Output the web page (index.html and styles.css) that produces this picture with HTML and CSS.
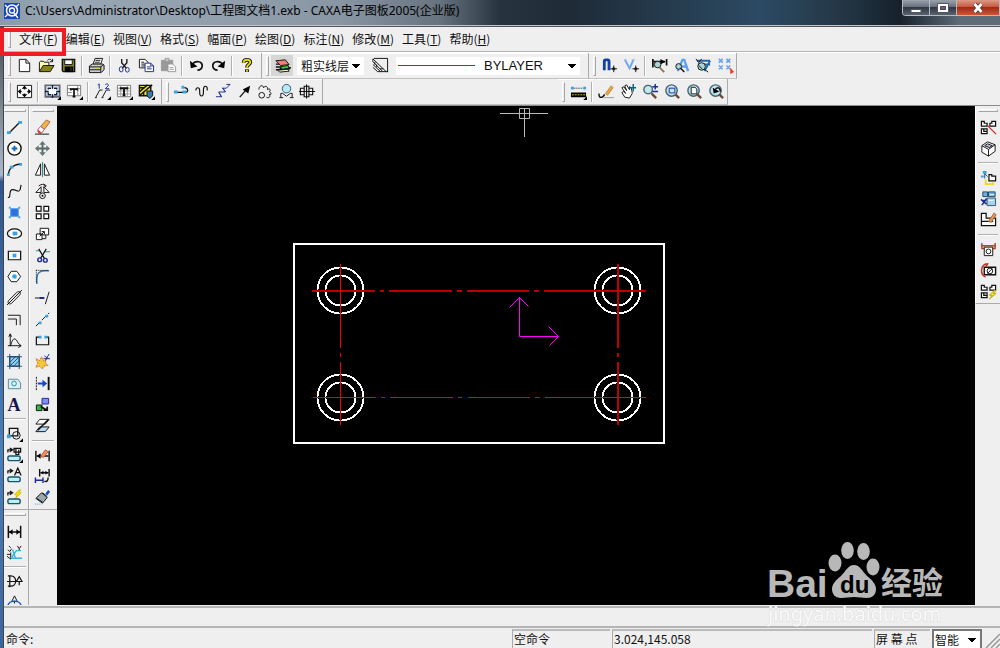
FILE: index.html
```html
<!DOCTYPE html>
<html lang="zh-CN">
<head>
<meta charset="utf-8">
<title>CAXA电子图板2005(企业版)</title>
<link rel="stylesheet" href="styles.css">
</head>
<body>
<div class="window">
<header class="titlebar">
  <svg class="app-icon" viewBox="0 0 16 16"><rect width="16" height="16" fill="#1747b8"/><circle cx="8" cy="7.500" r="5.500" fill="none" stroke="#fff" stroke-width="1.500"/><circle cx="8" cy="7.500" r="2.500" fill="none" stroke="#fff" stroke-width="1.300"/><path d="M10 10l4 5M1 2l2 2M15 1l-3 3M1 14l3-3" stroke="#fff" stroke-width="1.300"/></svg>
  <h1 class="title">C:\Users\Administrator\Desktop\工程图文档1.exb - CAXA电子图板2005(企业版)</h1>
  <div class="caption">
    <button class="cap" aria-label="最小化"><svg viewBox="0 0 14 12"><path d="M2 7.500h10v3H2z" fill="#fff" stroke="#556"/></svg></button>
    <button class="cap" aria-label="最大化"><svg viewBox="0 0 14 12"><path d="M1.500 1.500h11v9h-11z" fill="#fff" stroke="#556"/><path d="M4.500 4.500h5v3h-5z" fill="#667" stroke="#445"/></svg></button>
    <button class="cap close" aria-label="关闭"><svg viewBox="0 0 14 12"><path d="M3.500 2l7 8M10.500 2l-7 8" stroke="#533" stroke-width="4.500"/><path d="M3.500 2l7 8M10.500 2l-7 8" stroke="#fff" stroke-width="2.800"/></svg></button>
  </div>
</header>

<nav class="menubar">
  <i class="grip"></i>
  <button class="menu marked">文件(<u>F</u>)</button>
  <button class="menu">编辑(<u>E</u>)</button>
  <button class="menu">视图(<u>V</u>)</button>
  <button class="menu">格式(<u>S</u>)</button>
  <button class="menu">幅面(<u>P</u>)</button>
  <button class="menu">绘图(<u>D</u>)</button>
  <button class="menu">标注(<u>N</u>)</button>
  <button class="menu">修改(<u>M</u>)</button>
  <button class="menu">工具(<u>T</u>)</button>
  <button class="menu">帮助(<u>H</u>)</button>
</nav>

<div class="bands">
<div class="row">
  <div class="band">
    <i class="grip"></i>
    <button class="tool" aria-label="新建"><svg viewBox="0 0 18 18"><path class="w" d="M3.500 2.500h7l4 4v9h-11z"/><path d="M10.500 2.500v4h4"/></svg></button>
    <button class="tool" aria-label="打开"><svg viewBox="0 0 18 18"><path d="M1.500 15V5.500l1-1h3l1 1h5V9" fill="#fffbb0"/><path d="M1.500 15.500l4-6.500H17l-4 6.500z" fill="#858512"/><path d="M10 3.500c2-2 4-1 5 1M15.500 2v3h-3"/></svg></button>
    <button class="tool" aria-label="保存"><svg viewBox="0 0 18 18"><path d="M2.500 2.500h13v13h-12l-1-1z" fill="#8b8b12" stroke-width="1.500"/><path class="w" d="M5 3h8v5H5z"/><path class="k" d="M5 10h9v6H5z"/><path class="w" d="M11 11.500h1v3h-1z"/></svg></button>
    <i class="sep"></i>
    <button class="tool" aria-label="打印"><svg viewBox="0 0 18 18"><path class="w" d="M5.500 7.500l2-6h8l-2 6z"/><path d="M8 3.500h5M7.500 5.500h5"/><path d="M1.500 9.500l3-2h11l1.500 1v5l-3 3h-12.500z" fill="#ccc"/><path d="M1.500 10.500h12l3-2.500M13.500 10v6M2 13.500h11"/><path d="M8 12h4" stroke="#dd0"/></svg></button>
    <i class="sep"></i>
    <button class="tool" aria-label="剪切"><svg viewBox="0 0 18 18"><path d="M6 2v4l5 6M11.500 2v4l-5 6" stroke-width="1.400"/><g class="n"><ellipse cx="5.500" cy="13" rx="2" ry="2.800"/><ellipse cx="12" cy="13.500" rx="2" ry="2.500"/></g></svg></button>
    <button class="tool" aria-label="复制"><svg viewBox="0 0 18 18"><path class="w" d="M1.500 2.500h6l3 3v6h-9z"/><path d="M3.500 5.500h3M3.500 7.500h4M3.500 9.500h4"/><path class="w n" d="M7.500 6.500h6l3 3v6h-9z"/><path class="n" d="M13.500 6.500v3h3M9.500 10.500h4M9.500 12.500h5"/></svg></button>
    <button class="tool" aria-label="粘贴"><svg viewBox="0 0 18 18" class="dim"><path d="M1.500 3.500h12v11h-12z" fill="#999"/><path d="M5.500 1.500h4v3h-4z" fill="#ccc"/><path class="w" d="M8.500 7.500h5l3 3v5h-8z"/><path d="M10 11h4M10 13h5"/></svg></button>
    <i class="sep"></i>
    <button class="tool" aria-label="撤销"><svg viewBox="0 0 18 18"><path d="M4 9c3-6 12-5 11 1-.5 3-3 4-5 4" stroke-width="1.800"/><path class="k" d="M2 4l1 8 7-2z"/></svg></button>
    <button class="tool" aria-label="重做"><svg viewBox="0 0 18 18"><path d="M14 9c-3-6-12-5-11 1 .5 3 3 4 5 4" stroke-width="1.800"/><path class="k" d="M16 4l-1 8-7-2z"/></svg></button>
    <i class="sep"></i>
    <button class="tool" aria-label="帮助"><svg viewBox="0 0 18 18"><path d="M6 6c0-4 7-4 7-.5C13 8 9.500 8 9.500 11M9.500 13v3" stroke-width="4"/><path d="M6 6c0-4 7-4 7-.5C13 8 9.500 8 9.500 11M9.500 13.500v2" stroke="#e8dc00" stroke-width="2"/></svg></button>
  </div>
  <div class="band">
    <i class="grip"></i>
    <button class="tool pressed" aria-label="图层"><svg viewBox="0 0 18 18"><path d="M2 13.500h13l2-2-11 1M2 10.500h11M2 7.500h4" stroke-width="1.500"/><path d="M2 4l10-1 4 5-9 1z" fill="#f08078"/><path d="M7 10l8-1 1 3-8 1z" fill="#3bcc3b"/><path class="w" d="M4 14l11-1 1 2-10 1z"/></svg></button>
    <select class="combo layer" aria-label="当前图层"><option>粗实线层</option></select>
    <button class="tool" aria-label="线型设置"><svg viewBox="0 0 18 18"><path d="M2 1.500h14.500V16"/><path d="M1 2l14 13.500M1 5l10 10M1 8l8 7.500M1 11l5 4.500M8 12.500h4M6 15.500h11M1 2v3M3 5v3M5 8v3"/></svg></button>
    <select class="combo linetype" aria-label="线型"><option>BYLAYER</option></select>
  </div>
  <div class="band">
    <i class="grip"></i>
    <button class="tool" aria-label="捕捉"><svg viewBox="0 0 18 18"><path d="M3.500 14V4.500Q3.500 3 5 3h2q1.500 0 1.500 1.500V14" stroke="#1240a8" stroke-width="3"/><path d="M13.500 9v7M10 12.500h7M12.500 11.500h2v2h-2z"/></svg></button>
    <button class="tool" aria-label="点过滤"><svg viewBox="0 0 18 18"><path d="M2 3l5 9 4-9" stroke="#6ca6ee" stroke-width="2"/><path d="M1 3h3M9 3h4M6 12h3" stroke="#abc"/><path d="M13.500 9v7M10 12.500h7M12.500 11.500h2v2h-2z"/></svg></button>
    <i class="sep"></i>
    <button class="tool" aria-label="标注设置"><svg viewBox="0 0 18 18"><path d="M2 2v9M16.500 2v7M3 5h12" stroke-width="1.800"/><path class="k" d="M10 2l5 3-5 3z"/><circle cx="7" cy="8" r="3.500" fill="#a9d4d4"/><path d="M9 11l5 5" stroke="#857560" stroke-width="2"/></svg></button>
    <button class="tool" aria-label="文本风格"><svg viewBox="0 0 18 18"><path d="M5 15l5-12h2l4 12M8 10h7" stroke="#5f9ff0" stroke-width="2.500"/><circle cx="6" cy="10" r="3" fill="#a9d4d4"/><path d="M8 12l4 4" stroke-width="1.500"/></svg></button>
    <button class="tool" aria-label="剖面图案"><svg viewBox="0 0 18 18"><path d="M2 4h14M10 15l6-11M3 8h13" stroke="#2468a8" stroke-width="2"/><circle cx="7" cy="10" r="4" fill="#a9d4d4"/><path d="M4 9l4 4M10 13l4 3M1 2l3 4 3-4"/></svg></button>
    <button class="tool" aria-label="点样式"><svg viewBox="0 0 18 18"><path d="M2 2l4 4M6 2l-4 4M10 2l4 4M14 2l-4 4M2 9l4 4M6 9l-4 4M10 9l4 4M14 9l-4 4" stroke="#68a1ed" stroke-width="1.700"/><path d="M14 11l4 5-4 2z" fill="#f53b0b" stroke="none"/></svg></button>
  </div>
</div>
<div class="row">
  <div class="band">
    <i class="grip"></i>
    <button class="tool" aria-label="图幅"><svg viewBox="0 0 18 18"><path class="w" d="M1.500 2.500h15v13h-15z"/><path d="M9 4v3M9 11v3M3 9h3M12 9h3" stroke-width="1.500"/><path class="k" d="M6 6l3-3 3 3zM6 12l3 3 3-3zM5 6L2 9l3 3zM13 6l3 3-3 3z"/></svg></button>
    <i class="sep"></i>
    <button class="tool" aria-label="图框"><svg viewBox="0 0 18 18"><path class="w" d="M1.500 2.500h15v12h-15z" stroke="#667" stroke-width="2"/><path d="M4.500 7V5.500h3M10.500 5.500h3V7M4.500 10v2.500h3M10.500 12.500h3V10M9 2v4M9 12v4M1 9h4M13 9h4" stroke="#024" stroke-width="1.500"/><path class="k" d="M18 14v4h-4z"/></svg></button>
    <button class="tool" aria-label="标题栏"><svg viewBox="0 0 18 18"><path class="w" d="M1.500 2.500h14v11h-14z" stroke="#777"/><path d="M1 6h14M1 10h5M12.500 3v10" stroke="#888"/><path d="M5 8V6.500h7V8M8.500 6v9M7 14.500h3" stroke-width="1.800"/><path class="k" d="M18 14v4h-4z"/></svg></button>
    <i class="sep"></i>
    <button class="tool" aria-label="序号"><svg viewBox="0 0 18 18"><path d="M2 15l4-7.500h3M9 15l4-7.500h4M1 15.500h2M8 15.500h2"/><path class="n" d="M4 2l1.500-1v5M12 2c1-2 4-1 3 1l-3 3h4"/><path class="k" d="M18 14v4h-4z"/></svg></button>
    <button class="tool" aria-label="明细表"><svg viewBox="0 0 18 18"><path class="w" d="M1.500 2.500h14v12h-14z" stroke="#777"/><path d="M1 5.500h15M1 8.500h15M1 11.500h15M5 3v11M12 3v11" stroke="#999"/><path d="M5 7V5.500h7V7M8.500 5v8M7 13h3" stroke-width="2"/><path class="k" d="M18 14v4h-4z"/></svg></button>
    <button class="tool" aria-label="填写明细"><svg viewBox="0 0 18 18"><path d="M1.500 2.500h12v11h-12z" fill="#e9e13b" stroke-width="1.500"/><path d="M2 13L15 2M2 9l8-7M2 5h4M6 13V9" stroke-width="1.500"/><path d="M9.500 8.500h6v5l-3 3-3-3z" fill="#347bb8"/><path class="k" d="M18 14v4h-4z"/></svg></button>
  </div>
  <div class="band tight">
    <i class="grip"></i>
    <button class="tool" aria-label="引出线"><svg viewBox="0 0 18 18"><path d="M4 10h9c4 0 3-5-1-5" stroke-width="1.300"/><path class="s" d="M1 8h4v3H1zM10 8h4v3h-4zM9 3h3v3H9z"/></svg></button>
    <button class="tool" aria-label="波浪线"><svg viewBox="0 0 18 18"><path d="M2 8c0-4 4-4 4 0v2c0 5 4 5 4 0V7c0-5 4-4 4-1v2" stroke-width="1.200"/></svg></button>
    <button class="tool" aria-label="双折线"><svg viewBox="0 0 18 18"><path class="n" d="M1 14.500h6l-3-5h7l-3-4h4l4-4M7 15l-3-5M11 9L8 5M12 1.500h4"/></svg></button>
    <button class="tool" aria-label="箭头"><svg viewBox="0 0 18 18"><path d="M4 15l6-7" stroke-width="1.400"/><path class="k" d="M15 3l-2 8-6-4z"/></svg></button>
    <button class="tool" aria-label="齿轮"><svg viewBox="0 0 18 18"><path d="M2 7c0-5 5-5 5-2 2-3 5-1 4 2 3-2 4 1 2 2 3 2 2 4 0 3 2 4-2 4-3 3"/><circle cx="5" cy="13" r="3"/></svg></button>
    <button class="tool" aria-label="圆弧拟合"><svg viewBox="0 0 18 18"><circle cx="9" cy="6" r="4.500" fill="#b8e8f4" stroke="#357"/><path d="M3 15v-4h2l4 3 4-3h2v4M1.500 15.500h4M12.500 15.500h4"/></svg></button>
    <button class="tool" aria-label="孔/轴"><svg viewBox="0 0 18 18"><path d="M1.500 5.500h4v7h-4zM5.500 3.500h5v11h-5zM10.500 5.500h4v7h-4zM0 9h17M8 1.500v15" stroke-width="1.200"/></svg></button>
  </div>
  <i class="spacer"></i>
  <div class="band">
    <i class="grip"></i>
    <button class="tool" aria-label="两点距离"><svg viewBox="0 0 18 18"><path d="M4 5.500h10" stroke-dasharray="1 1"/><path class="s" d="M1 4h3v3H1zM14 4h3v3h-3z"/><path class="k" d="M1 10h16v5H1zM18 14v4h-4z"/><path d="M2 12.500h14" stroke="#dc0" stroke-dasharray="2 1"/></svg></button>
    <i class="sep"></i>
    <button class="tool" aria-label="重画"><svg viewBox="0 0 18 18"><path d="M1 11c0 6 4 5 6 1" stroke-width="1.500"/><path d="M8 11l6-8 2 2-6 8z" fill="#f4a433" stroke="#b85"/><path d="M6 15.500h11" stroke="#999"/></svg></button>
    <button class="tool" aria-label="平移显示"><svg viewBox="0 0 18 18"><path class="w" d="M5 15L2 10l2-1 2 2-4-6 2-1 3 4-2-5 2-1 3 5V4l2 1 1 6-3 5z"/><path d="M14 1v8M10 5h7" stroke="#068" stroke-width="1.500"/></svg></button>
    <button class="tool" aria-label="动态缩放"><svg viewBox="0 0 18 18"><circle class="lens" cx="6.500" cy="7" r="4.500"/><path class="handle" d="M10 11l5 5"/><path class="n" d="M11 4h6M14 1v6M11 9h6" stroke-width="1.500"/></svg></button>
    <button class="tool" aria-label="窗口缩放"><svg viewBox="0 0 18 18"><circle class="lens" cx="8" cy="8" r="6"/><path class="n" d="M5.500 5.500h6v5h-6z"/><path class="handle" d="M12 12l4 4"/></svg></button>
    <button class="tool" aria-label="显示全部"><svg viewBox="0 0 18 18"><circle class="lens" cx="8" cy="8" r="6"/><path class="w" d="M5.500 4.500h4l2 2v5h-6z"/><path class="handle" d="M12 12l4 4"/></svg></button>
    <button class="tool" aria-label="显示回溯"><svg viewBox="0 0 18 18"><circle class="lens" cx="8" cy="8" r="6"/><path class="k" d="M5 5l1 6 6-2z"/><path d="M7 8c3-5 6-3 6 1" stroke-width="1.500"/><path class="handle" d="M12 12l4 4"/></svg></button>
  </div>
</div>
</div>

<main class="workspace">
<aside class="palettes">
 <div class="pair">
  <div class="palette">
    <i class="hgrip"></i>
    <div class="stack">
    <button class="tool" aria-label="直线"><svg viewBox="0 0 18 18"><path d="M3 15L14 4" stroke-width="1.400"/><path class="s" d="M1 13h4v3H1zM13 2h4v3h-4z"/></svg></button>
    <button class="tool" aria-label="圆"><svg viewBox="0 0 18 18"><circle cx="9" cy="9" r="7" class="w" stroke-width="1.500"/><path d="M9 6v6M6 9h6" stroke="#16b" stroke-width="2"/></svg></button>
    <button class="tool" aria-label="圆弧"><svg viewBox="0 0 18 18"><path d="M2.500 15c0-7 5-11 13-12" stroke-width="1.200"/><path class="s" d="M1 13h3v3H1zM4 5h4v3H4zM14 2h3v3h-3z"/></svg></button>
    <button class="tool" aria-label="样条"><svg viewBox="0 0 18 18"><path d="M2 15c4 2 0-8 5-8s6 4 8 0l1-5" stroke-width="1.200"/></svg></button>
    <button class="tool" aria-label="点"><svg viewBox="0 0 18 18"><path d="M5 5h8v8H5z" fill="#2b72df" stroke="#4898e8"/><path class="s" d="M3 3h2v2H3zM13 3h2v2h-2zM3 13h2v2H3zM13 13h2v2h-2z"/></svg></button>
    <button class="tool" aria-label="椭圆"><svg viewBox="0 0 18 18"><ellipse class="w" cx="9" cy="9" rx="7.500" ry="5" stroke-width="1.300"/><path class="s" d="M7 7h5v4H7z"/></svg></button>
    <button class="tool" aria-label="矩形"><svg viewBox="0 0 18 18"><path class="w" d="M2.500 4.500h13v9h-13z" stroke-width="1.300"/><path class="s" d="M7 7h4v4H7z"/></svg></button>
    <button class="tool" aria-label="正多边形"><svg viewBox="0 0 18 18"><path class="w" d="M5.500 3.500h6l4 5.500-4 5.500h-6L2 9z"/><circle class="s" cx="9" cy="9" r="2.500"/></svg></button>
    <button class="tool" aria-label="中心线"><svg viewBox="0 0 18 18"><path d="M3 12l8-8c3-3 6 0 3 3l-8 8c-3 2-5 0-3-3zM1 17L17 1"/></svg></button>
    <button class="tool" aria-label="等距线"><svg viewBox="0 0 18 18"><path d="M2 4.500h13V15M2 8.500h9V15"/></svg></button>
    <button class="tool" aria-label="公式曲线"><svg viewBox="0 0 18 18"><path d="M4.500 2v13M2 14.500h14M3 5l1.500-3L6 5M13 12l3 2.500-3 2M5 14c2-8 5-9 8-2"/></svg></button>
    <button class="tool" aria-label="剖面线"><svg viewBox="0 0 18 18"><path d="M4 4h10v10H4z" fill="#93cff1"/><path d="M1 4h16M1 14h16M4 1v16M14 1v16M4 10l6-6M4 14L14 4M8 14l6-6" stroke="#174f80"/></svg></button>
    <button class="tool" aria-label="填充"><svg viewBox="0 0 18 18"><path d="M2.500 4.500h10l3 4v6h-13z" fill="#d8f1f5" stroke="#5a8597"/><circle cx="8.500" cy="9" r="2.500" stroke="#2b89a8"/></svg></button>
    <button class="tool letter" aria-label="文字">A</button>
    </div>
    <i class="hsep"></i>
    <div class="stack">
    <button class="tool" aria-label="块操作"><svg viewBox="0 0 18 18"><path d="M3.500 3.500h9v8h-9z" stroke-width="1.400"/><circle cx="11" cy="11" r="4"/><path class="s" d="M1 10h4v4H1z"/><path class="k" d="M18 14v4h-4z"/></svg></button>
    <button class="tool" aria-label="库操作"><svg viewBox="0 0 18 18"><path d="M2 7V4h4M4 2l3 2-3 2M8.500 2.500h7v4h-7zM10.500 2v7h3V4" stroke-width="1.300"/><rect class="chip" x="2" y="10.500" width="13" height="5" rx="2"/><path class="k" d="M18 14v4h-4z"/></svg></button>
    <button class="tool" aria-label="文字块"><svg viewBox="0 0 18 18"><path d="M2 7V4h4M4 2l3 2-3 2M9 9l3.500-8L16 9M10 6h5" stroke-width="1.300"/><rect class="chip" x="2" y="10.500" width="13" height="5" rx="2"/></svg></button>
    <button class="tool" aria-label="闪电块"><svg viewBox="0 0 18 18"><path d="M2 7V4h4M4 2l3 2-3 2" stroke-width="1.300"/><path d="M14 1L9 6h3l-2 4 6-6h-3l3-3z" fill="#ffe600" stroke="#d9be00"/><rect class="chip" x="2" y="10.500" width="13" height="5" rx="2"/></svg></button>
    </div>
  </div>
  <div class="palette">
    <i class="hgrip"></i>
    <div class="stack">
    <button class="tool" aria-label="删除"><svg viewBox="0 0 18 18"><path d="M7 8l6-7 4 2-6 8z" fill="#f2b24c" stroke="#a64"/><path class="w" d="M4 11l3-3 4 3-3 4H5z" stroke="#966"/><path d="M4 12l3 3" stroke="#e33" stroke-width="2"/><path d="M1 16h15"/></svg></button>
    <button class="tool" aria-label="平移"><svg viewBox="0 0 18 18"><path d="M9 3v12M3 9h12" stroke="#566" stroke-width="2"/><path d="M5.500 5L9 1l3.500 4zM5.500 13L9 17l3.500-4zM5 5.500L1 9l4 3.500zM13 5.500L17 9l-4 3.500z" fill="#677" stroke="none"/></svg></button>
    <button class="tool" aria-label="镜像"><svg viewBox="0 0 18 18"><path class="w" d="M7 3v12H1.500zM11 3v12h5.500z"/><path d="M9 1v16" stroke="#288"/></svg></button>
    <button class="tool" aria-label="旋转"><svg viewBox="0 0 18 18"><path class="w" d="M7.500 4v6H2zM10.500 4v6H16z"/><circle cx="9" cy="13.500" r="3"/><circle class="k" cx="9" cy="13.500" r="1"/><path d="M5 3c3-2 5-2 7 0M10 1l3 2-3 2"/></svg></button>
    <button class="tool" aria-label="阵列"><svg viewBox="0 0 18 18"><path class="w" d="M2.500 2.500h5v5h-5zM10.500 2.500h5v5h-5zM2.500 10.500h5v5h-5zM10.500 10.500h5v5h-5z" stroke-width="1.300"/></svg></button>
    <button class="tool" aria-label="比例缩放"><svg viewBox="0 0 18 18"><path class="w" d="M6.500 3.500h9v7h-9zM2.500 9.500h6v6h-6z"/><path d="M6 12l5-5M8 7h3v3M8.500 14.500h4v-4"/></svg></button>
    <button class="tool" aria-label="裁剪"><svg viewBox="0 0 18 18"><path d="M2 4h4M11 5h6" stroke="#288"/><path d="M5 2l6 10M13 2L7 12" stroke-width="1.300"/><g class="n" stroke-width="1.500"><circle cx="6" cy="13.500" r="2"/><circle cx="12" cy="14" r="2"/></g></svg></button>
    <button class="tool" aria-label="过渡"><svg viewBox="0 0 18 18"><path d="M3 17v-6c0-5 3-8 8-8h5" stroke="#357cae" stroke-width="1.600"/><path d="M2.500 2v14M2 2.500h14" stroke-dasharray="1 1"/></svg></button>
    <button class="tool" aria-label="齐边"><svg viewBox="0 0 18 18"><path d="M1 9.500h6M12 16l4-13"/><path d="M6 9.500h5" stroke="#128" stroke-width="2"/></svg></button>
    <button class="tool" aria-label="打断"><svg viewBox="0 0 18 18"><path d="M2 16L16 2" stroke-dasharray="6 3"/><path class="s" d="M5 11h3v3H5zM12 4h3v3h-3z"/></svg></button>
    <button class="tool" aria-label="拉伸"><svg viewBox="0 0 18 18"><path d="M6 5.500H2.500v8h13v-8H12" stroke-width="1.300"/><path class="s" d="M5 4h3v3H5zM11 4h3v3h-3z"/></svg></button>
    <button class="tool" aria-label="打散"><svg viewBox="0 0 18 18"><path d="M2 6l4 2 2-4 2 4 3-1-1 4 3 2-5 1-1 3-3-3-4 1 2-4z" fill="#f4c832" stroke="#c64" stroke-dasharray="2 1"/><path class="n" d="M11 3l4 3M16 1l-4 7M10 6h7"/></svg></button>
    <button class="tool" aria-label="局部放大"><svg viewBox="0 0 18 18"><path d="M2.500 2v14" stroke-dasharray="2 1"/><path d="M15.500 2v14" stroke-width="2"/><path class="b" d="M4 8h5V5l5 4-5 4v-3H4z"/></svg></button>
    <button class="tool" aria-label="转换"><svg viewBox="0 0 18 18"><path d="M8.500 2.500h7v6h-7z" fill="#7e8ff0" stroke="#22a"/><path d="M2.500 9.500h6v6h-6z" fill="#2eb84a"/><path d="M7 11l7 4M14 11v4h-4" stroke-width="1.800"/></svg></button>
    <button class="tool" aria-label="层控制"><svg viewBox="0 0 18 18"><path class="w" d="M6 2.500h10l-4 5H2z"/><path d="M6 10.500h10l-4 5H2z" fill="#b7ddf6"/><path d="M15 3L4 14" stroke-width="1.500"/></svg></button>
    </div>
    <i class="hsep"></i>
    <div class="stack">
    <button class="tool" aria-label="标注编辑"><svg viewBox="0 0 18 18"><path d="M2 4v11M16 4v11M3 9.500h12" stroke-width="1.500"/><path class="k" d="M3 9.500l4-3v6z"/><path d="M7 10l5-7 3 2-5 6z" fill="#f79058" stroke="#b54"/></svg></button>
    <button class="tool" aria-label="尺寸驱动"><svg viewBox="0 0 18 18"><path d="M6 1v8M16 1v8M7 5h8M15 10c0 4-2 5-4 4" stroke-width="1.500"/><path class="k" d="M7 5l3-2v4zM15 5l-3-2v4z"/><path class="n" d="M1.500 10v6M9.500 10v6M2 13h7" stroke-width="1.500"/></svg></button>
    <button class="tool" aria-label="格式刷"><svg viewBox="0 0 18 18"><path d="M12 5l3-4 2 2-3 4z" class="b"/><path d="M8 4l6 5-5 6-7-5z" fill="#9aa9ad"/><path d="M3 10l6 4M9 4l5 4"/><path d="M1 16h8" stroke="#59c" stroke-dasharray="1 1"/></svg></button>
    </div>
  </div>
 </div>
 <div class="palette lower">
    <i class="hgrip"></i>
    <div class="stack">
    <button class="tool" aria-label="尺寸标注"><svg viewBox="0 0 18 18"><path d="M2.500 3v13M15.500 3v13M3 9.500h12" stroke-width="1.600"/><path class="k" d="M3 9.500l4-3v6zM15 9.500l-4-3v6z"/></svg></button>
    <button class="tool" aria-label="坐标标注"><svg viewBox="0 0 18 18"><path d="M2 6l2 2 2-3M5 9v7M1 13l4 3M12 2l2 3 2-3M14 5v2M1 11h4M3 2l2 2"/><path d="M5 15h12M6 14l5-7h5M7 6l3 9" stroke="#35b4df" stroke-width="1.500"/></svg></button>
    </div>
    <i class="hsep"></i>
    <div class="stack">
    <button class="tool" aria-label="倒角标注"><svg viewBox="0 0 18 18"><path d="M2 3h3c7 0 7 11 0 11H2M4 3v12M1 9h10M11 9l3-5 3 5zM14 9v4" stroke-width="1.300"/></svg></button>
    <button class="tool" aria-label="粗糙度"><svg viewBox="0 0 18 18"><path d="M6 8l3-6 3 6zM9 7v3"/><path d="M2 12c2-6 12-6 14 0" stroke="#25c" stroke-width="1.500"/></svg></button>
    </div>
 </div>
</aside>

<section class="canvas" aria-label="绘图区">
<svg class="drawing">
  <g fill="none" stroke="#b9b9b9"><path d="M443 7.500h48M467.500 2v29M462.500 2.500h10v10h-10z"/></g>
  <g fill="none" stroke="#fff" stroke-width="2">
    <path d="M237 138h370v199H237z"/>
    <g stroke-width="1.800" shape-rendering="crispEdges"><circle cx="283.500" cy="184.500" r="23"/><circle cx="283.500" cy="184.500" r="15"/>
    <circle cx="560.500" cy="184.500" r="23"/><circle cx="560.500" cy="184.500" r="15"/>
    <circle cx="283.500" cy="291.500" r="23"/><circle cx="283.500" cy="291.500" r="15"/>
    <circle cx="560.500" cy="291.500" r="23"/><circle cx="560.500" cy="291.500" r="15"/></g>
  </g>
  <g fill="none" stroke="#f00000">
    <path d="M255 185h63M323 185h4M332 185h63M400 185h5M410 185h62M477 185h5M487 185h102" stroke="#b80000" stroke-width="2"/>
    <path d="M256 291.500h63M324 291.500h4M333 291.500h63M401 291.500h4M411 291.500h62M478 291.500h5M488 291.500h101"/>
    <path d="M283.500 158v84M283.500 247v4M283.500 256v63"/>
    <path d="M561 158v84M561 247v4M561 256v63" stroke="#c00000" stroke-width="2"/>
  </g>
  <path d="M462.500 191v39.500H501M452.500 201.500l10-10 9 9M491.500 220.500l10 10-9 9" fill="none" stroke="#ff00ff"/>
</svg>
</section>

<aside class="palette right">
  <i class="hgrip"></i>
  <div class="stack">
  <button class="tool" aria-label="定义图符"><svg viewBox="0 0 18 18"><path class="w" d="M1.500 2.500h3v2h3v3h-6zM10.500 4.500h2v-2h4v5h-6zM1.500 10.500h6v5h-6zM4 10v3h3" stroke-width="1.300"/><path d="M8 7l9 9" stroke="#d22" stroke-width="1.300"/></svg></button>
  <button class="tool" aria-label="三维"><svg viewBox="0 0 18 18"><path class="w" d="M2 6l6-4 8 3v7l-7 5-7-4zM2 6l7 4 7-5M9 10v7"/><path d="M5 6l3-2 5 2-3 2z" fill="#bbd"/></svg></button>
  </div>
  <i class="hsep"></i>
  <div class="stack">
  <button class="tool" aria-label="提取图符"><svg viewBox="0 0 18 18"><path class="s" d="M3 2h4v3H3zM1 7h3v2H1z"/><path d="M5 5v5M5 5l3 3" stroke="#248"/><path class="w" d="M9.500 8.500V6h3v1.500h4v5h-7z" stroke-width="1.300"/><path d="M6 11v5h8v-2" stroke="#eed925" stroke-width="2"/></svg></button>
  <button class="tool" aria-label="图库管理"><svg viewBox="0 0 18 18"><path d="M3 2h5v5H3zM9 2h7v5H9z" fill="#6db0e6" stroke="#245"/><path d="M7.500 8.500h9v8h-9z" fill="#a6d4ef" stroke="#357"/><path class="n" d="M1 10l6 5M7 9l-5 7M2 11h5" stroke-width="1.600"/><path d="M10 5h5M9 11h5" stroke="#fff"/></svg></button>
  <button class="tool" aria-label="图库编辑"><svg viewBox="0 0 18 18"><path class="w" d="M1.500 2.500h5v5h10v8h-15zM2 11h12" stroke-width="1.300"/><path d="M9 11l6-9 2 2-5 8z" fill="#ed9551" stroke="#964"/></svg></button>
  </div>
  <i class="hsep"></i>
  <div class="stack">
  <button class="tool" aria-label="构件库"><svg viewBox="0 0 18 18"><path d="M1 5h16M2 2v6h3v3M16 2v6h-3v3" stroke="#b44525" stroke-width="1.500"/><path class="w" d="M4.500 6.500h9v9h-9z"/><circle cx="9" cy="11" r="2.500"/></svg></button>
  <button class="tool" aria-label="技术要求"><svg viewBox="0 0 18 18"><path class="w" d="M4.500 5.500h12v8h-12z" stroke-width="1.500"/><circle cx="10.500" cy="9.500" r="3"/><path d="M8 12l5-5"/><path d="M7 2C0 3 0 14 6 16M5 2h3L6 5" stroke="#c3321f" stroke-width="1.600"/></svg></button>
  <button class="tool" aria-label="驱动图符"><svg viewBox="0 0 18 18"><path class="w" d="M1.500 2.500h3v2h3v3h-6zM10.500 4.500h2v-2h4v5h-6zM1.500 10.500h6v5h-6zM4 10v3h3" stroke-width="1.300"/><path d="M15 8l-5 5h3l-3 4 7-6h-3l3-3z" fill="#ffea20" stroke="#b9a800"/></svg></button>
  </div>
</aside>
</main>

<footer class="bottom">
  <div class="prompt"></div>
  <div class="status">
    <label class="cmd">命令:<input type="text"></label>
    <div class="cell idle">空命令</div>
    <div class="cell coords">3.024,145.058</div>
    <div class="cell snap">屏 幕 点</div>
    <select class="combo mode" aria-label="捕捉方式"><option>智能</option></select>
    <svg class="sizer" viewBox="0 0 16 16"><path d="M2 16L16 2M7 16l9-9M12 16l4-4" stroke="#999" stroke-width="1.500"/></svg>
  </div>
  <svg class="watermark" viewBox="0 0 200 90">
    <g fill="#b8b8b8">
      <text class="wm-bai" x="7" y="57">Bai</text>
      <ellipse cx="75" cy="23" rx="6.500" ry="8.500"/>
      <ellipse cx="87.500" cy="10.500" rx="6.300" ry="8.500"/>
      <ellipse cx="103.500" cy="11.500" rx="6.300" ry="8.500"/>
      <ellipse cx="113" cy="27" rx="6.500" ry="8.500"/>
      <path d="M94 25c6 0 8 6 13 11 5 4 9 8 9 13 0 6-4 9-9 9-5 0-8-1-13-1s-8 1-13 1c-6 0-9-4-9-9 0-5 4-9 9-13 5-5 7-11 13-11z"/>
      <text class="wm-cn" x="121" y="54">经验</text>
    </g>
    <text class="wm-du" x="80" y="53">du</text>
    <text class="wm-url" x="8" y="81">jingyan.baidu.com</text>
  </svg>
</footer>
</div>
</body>
</html>
```

FILE: styles.css
```css
* { box-sizing: border-box; }
body {
  margin: 0;
  font: 12px/16px "Noto Sans CJK SC", sans-serif;
  color: #111;
  background: #efefef;
}
button, select, input { font: inherit; color: inherit; margin: 0; padding: 0; border: 0; background: none; }
svg { display: block; }

.window {
  display: flex;
  flex-direction: column;
  height: 100vh;
  padding-left: 4px;
  overflow: hidden;
  background:
    linear-gradient(#2b3843, #65717c 12%, #a9b9ca 27%, #2e5790 28%, #4a7fbd 70%, #3a66a0) 0 0 / 3px 100% no-repeat,
    #444;
}

/* title bar */
.titlebar {
  display: flex;
  align-items: center;
  height: 26px;
  margin-left: -4px;
  padding: 0 0 3px 4px;
  flex: none;
  background:
    linear-gradient(90deg, rgba(190, 202, 212, .55), rgba(180, 192, 203, .75) 6%, rgba(170, 182, 194, .7) 34%, rgba(150, 162, 174, .55) 44%, transparent 50%),
    linear-gradient(90deg, #4a5f72 0, #46566a 25%, #2b3742 45%, #1f2b37 57%, #2c4a63 76%, #243746 84%, #16212c 90%, #5e6b78 96%);
  border-bottom: 1px solid #c0c4c8;
}
.app-icon { width: 16px; height: 16px; }
.title { flex: 1; margin: 0 0 0 5px; font: 12px/18px "Noto Sans", "Noto Sans CJK SC", sans-serif; color: #000; white-space: nowrap; }
.caption {
  display: flex;
  align-self: flex-start;
  border: 1px solid #b4bac2;
  border-top: 0;
  border-right: 0;
  border-radius: 0 0 0 4px;
  overflow: hidden;
}
.cap {
  display: grid;
  place-items: center;
  width: 27px;
  height: 15px;
  border-right: 1px solid #b4bac2;
  background: linear-gradient(#9aa3ac, #68727d 45%, #2e3843 50%, #59646f);
}
.cap svg { width: 14px; height: 12px; }
.close { width: 43px; background: linear-gradient(#dd9986, #c75a41 45%, #a62a12 50%, #cf5434); }

/* menu */
.menubar {
  display: flex;
  align-items: center;
  height: 26px;
  flex: none;
  padding-left: 4px;
  background: #efefef;
  border-top: 1px solid #555;
  border-bottom: 1px solid #b4b4b4;
}
.menu { position: relative; padding: 0 4px 1px; line-height: 20px; white-space: nowrap; }
.menubar .grip { height: 18px; margin-right: 4px; }
.marked::after {
  content: "";
  position: absolute;
  inset: -1px -4px -6px -15px;
  border: 4px solid #ee1c25;
}

/* toolbars */
.bands { flex: none; background: #efefef; border-top: 1px solid #fff; border-bottom: 1px solid #8c8c8c; }
.row { display: flex; height: 26px; }
.band {
  display: flex;
  align-items: center;
  padding: 0 4px;
  border-right: 1px solid #aaa;
  border-bottom: 1px solid #c2c2c2;
  box-shadow: inset 0 1px #fff;
}
.band:last-child { padding-right: 0; }
.grip {
  width: 3px;
  height: 20px;
  margin-right: 2px;
  border: 1px solid;
  border-color: #fff #a5a5a5 #a5a5a5 #fff;
  flex: none;
}
.sep { width: 2px; height: 20px; margin: 0 2px; background: #b0b0b0; border-right: 1px solid #fff; flex: none; }
.spacer { flex: 0 1 235px; border-bottom: 1px solid #c2c2c2; }
.tool { display: grid; place-items: center; width: 22px; height: 21px; flex: none; }
.tight .tool { width: 21px; }
.tool svg { width: 17px; height: 17px; fill: none; stroke: #111; stroke-width: 1; }
.tool .w { fill: #fff; }
.tool .k { fill: #000; stroke: none; }
.tool .s { fill: #36a5df; stroke: none; }
.tool .b { fill: #1746d1; stroke: none; }
.tool .n { stroke: #1b2a94; }
.tool .lens { fill: #bfe8ef; stroke: #47636f; stroke-width: 1.5; }
.tool .handle { stroke: #6b4b35; stroke-width: 2.5; }
.tool .chip { fill: #bdeef5; stroke: #16566b; stroke-width: 1.5; }
.tool svg.dim { stroke: #999; }
.pressed { background: #d6d6d6; }
.letter { font: bold 18px/20px "Liberation Serif", serif; color: #16164f; }
.combo {
  appearance: none;
  height: 18px;
  border-radius: 0;
  background:
    linear-gradient(to bottom left, #000 50%, transparent 52%) right 8px center / 4px 4px no-repeat,
    linear-gradient(to bottom right, #000 50%, transparent 52%) right 4px center / 4px 4px no-repeat,
    #fff;
}
.layer { width: 67px; padding-left: 4px; margin: 0 5px 0 4px; }
.linetype {
  width: 184px;
  margin: 0 4px 0 5px;
  padding-left: 88px;
  font: 13px/18px "Liberation Sans", sans-serif;
  background:
    linear-gradient(to bottom left, #000 50%, transparent 52%) right 8px center / 4px 4px no-repeat,
    linear-gradient(to bottom right, #000 50%, transparent 52%) right 4px center / 4px 4px no-repeat,
    linear-gradient(#f00, #f00) 2px 8px / 77px 1px no-repeat,
    #fff;
}

/* workspace */
.workspace { display: flex; flex: 1; min-height: 0; background: #efefef; }
.palettes { display: flex; flex-direction: column; overflow: hidden; flex: none; }
.pair { display: flex; border-bottom: 1px solid #aaa; }
.palette { width: 25px; padding: 3px 2px 0 0; border-right: 1px solid #aaa; }
.palette + .palette { width: 28px; padding-left: 2px; border-left: 1px solid #fff; border-right-color: #efefef; }
.hgrip { display: block; height: 3px; margin-bottom: 5px; border: 1px solid; border-color: #fff #a5a5a5 #a5a5a5 #fff; }
.hsep { display: block; height: 2px; margin: 3px 0; background: #b0b0b0; border-bottom: 1px solid #fff; }
.stack { display: flex; flex-direction: column; }
.palette .tool { width: 20px; }
.palette .tool:nth-child(3n) { margin-bottom: 1px; }
.canvas { flex: 1; min-width: 0; background: #000; overflow: hidden; }
.drawing { width: 100%; height: 100%; }
.palette.right { width: 25px; padding-left: 2px; margin-bottom: auto; border: 0; border-left: 1px solid #fff; border-bottom: 1px solid #aaa; }

/* command line and status */
.bottom { position: relative; flex: none; background: #efefef; }
.prompt { height: 22px; margin-top: 1px; border-top: 2px solid #b4b4b4; border-bottom: 2px solid #b4b4b4; }
.status { display: flex; align-items: flex-end; gap: 2px; height: 20px; line-height: 18px; white-space: nowrap; }
.cmd { display: flex; flex: 1; padding-left: 2px; }
.cmd input { flex: 1; min-width: 0; outline: 0; }
.cell { height: 19px; padding-left: 1px; line-height: 16px; border-top: 2px solid #bbb; border-left: 1px solid #aaa; }
.idle { width: 98px; }
.coords { width: 260px; }
.snap { width: 56px; }
.mode { width: 50px; height: 19px; padding-left: 1px; border: 2px solid #777; border-bottom: 0; }
.sizer { width: 16px; height: 16px; }
.watermark { position: absolute; right: 40px; bottom: 18px; width: 200px; height: 90px; pointer-events: none; }
.wm-bai { font: bold 39px "Liberation Sans", sans-serif; }
.wm-cn { font: bold 31px "Noto Sans CJK SC", sans-serif; }
.wm-du { font: bold 24px "Liberation Sans", sans-serif; fill: #000; }
.wm-url { font: 20px "Noto Sans", sans-serif; fill: #fafafa; stroke: #dadada; stroke-width: 1; paint-order: stroke; }
```
